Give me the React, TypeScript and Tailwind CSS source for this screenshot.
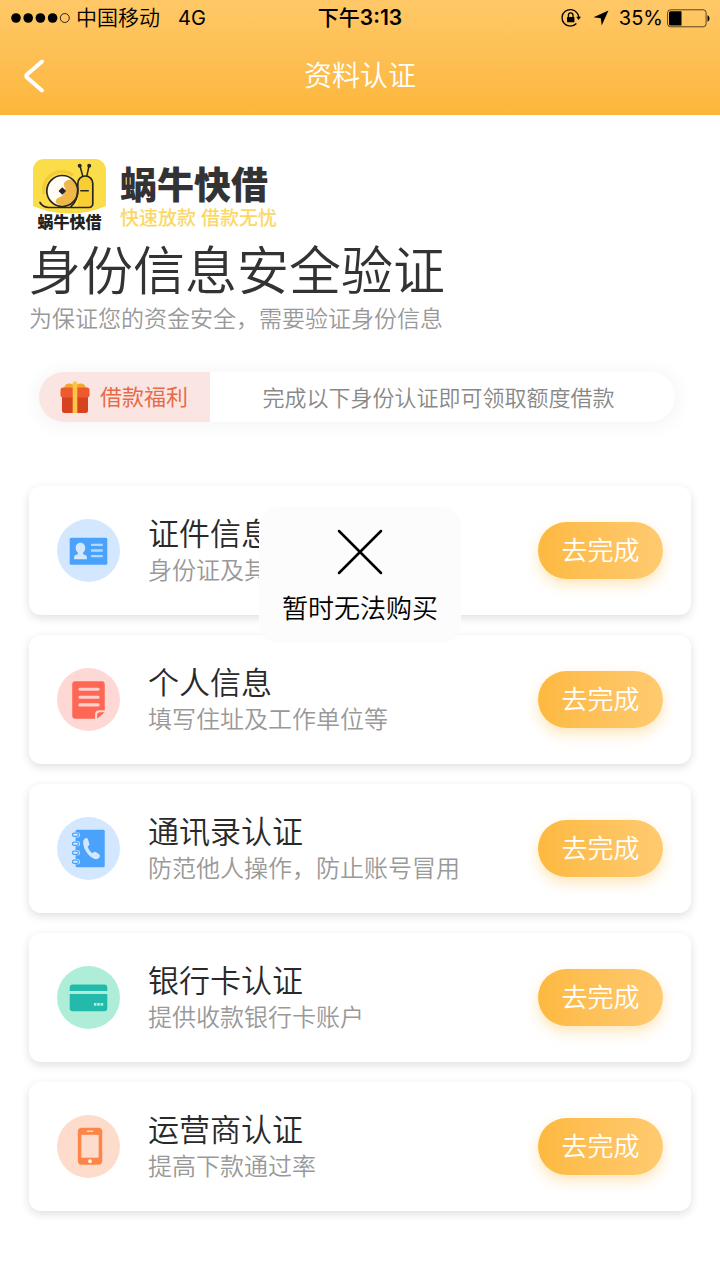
import type { ReactNode } from 'react';

type Step = { title: string; detail: string; icon: ReactNode };

function IdCardIcon() {
  return (
    <svg viewBox="0 0 62 62" className="size-full" aria-hidden="true">
      <circle cx="31" cy="31" r="31" fill="#d3e8fe" />
      <rect x="12.5" y="18.5" width="37" height="26.5" rx="1.5" fill="#4ba2fb" />
      <path d="M23 23.3c-2.8 0-4.6 2.1-4.6 5 0 2 .8 3.7 2.1 4.7v1.7c-2.3.5-3.7 1.3-3.7 3.2v1.6h12.6v-1.6c0-1.9-1.4-2.7-3.7-3.2V33c1.3-1 2.1-2.7 2.1-4.7 0-2.9-2-5-4.8-5z" fill="#d3e8fe" />
      <path d="M33.5 25.5h11.5M33.5 31h11.5M33.5 36.5h11.5" stroke="#b4d9fe" strokeWidth="2.3" />
    </svg>
  );
}

function DocumentIcon() {
  return (
    <svg viewBox="0 0 62 62" className="size-full" aria-hidden="true">
      <circle cx="31" cy="31" r="31" fill="#fed8d5" />
      <path d="M18 13h26a3 3 0 0 1 3 3v25.5h-5.5a4 4 0 0 0-4 4V50H18a3 3 0 0 1-3-3V16a3 3 0 0 1 3-3z" fill="#fe6755" />
      <path d="M39.5 50v-3.5a3 3 0 0 1 3-3H47z" fill="#fe6755" />
      <path d="M22.5 21h18M22.5 28.7h18M22.5 36.3h18" stroke="#fed0ca" strokeWidth="3" strokeLinecap="round" />
    </svg>
  );
}

function ContactsIcon() {
  return (
    <svg viewBox="0 0 62 62" className="size-full" aria-hidden="true">
      <circle cx="31" cy="31" r="31" fill="#d3e8fe" />
      <rect x="18.3" y="12.5" width="28.7" height="37" rx="1.5" fill="#4ba2fb" />
      {[17.5, 26.3, 35.1, 44].map((y) => (
        <g key={y}>
          <rect x="17" y={y - 2.6} width="5.6" height="5.2" rx="2.6" fill="#d3e8fe" />
          <rect x="15.2" y={y - 1.6} width="6" height="3.2" rx="1.6" fill="#d3e8fe" stroke="#4ba2fb" strokeWidth="1.2" />
        </g>
      ))}
      <path d="M28.5 20.7c-1.8.5-3 2.5-2.7 5.2.7 7 5.7 13.4 11.5 15.5 2 .6 4.2-.6 4.8-2.6.3-1-.2-1.9-1-2.5l-2.9-1.9c-.8-.5-1.7-.4-2.4.3l-1 1c-2.2-1.5-3.9-4-4.7-6.6l1-.8c.7-.6.9-1.4.6-2.2l-1.2-4.1c-.3-1-1.1-1.5-2-1.3z" fill="#d3e8fe" />
    </svg>
  );
}

function BankCardIcon() {
  return (
    <svg viewBox="0 0 62 62" className="size-full" aria-hidden="true">
      <circle cx="31" cy="31" r="31" fill="#aeeed9" />
      <path d="M12.5 24.7v-3.5a3 3 0 0 1 3-3h31a3 3 0 0 1 3 3v3.5zM12.5 27.5h37v14a3 3 0 0 1-3 3h-31a3 3 0 0 1-3-3z" fill="#23b9ab" />
      <path d="M36.3 37.8h9.2" stroke="#aeeed9" strokeWidth="2.8" strokeDasharray="2.6 .7" />
    </svg>
  );
}

function PhoneIcon() {
  return (
    <svg viewBox="0 0 62 62" className="size-full" aria-hidden="true">
      <circle cx="31" cy="31" r="31" fill="#fedccb" />
      <rect x="20.5" y="12.5" width="24" height="36.5" rx="4" fill="#fd8549" />
      <rect x="24" y="19.5" width="17" height="22.5" fill="#fedccb" />
      <path d="M30 16h5" stroke="#fedccb" strokeWidth="1.5" strokeLinecap="round" />
      <circle cx="32.5" cy="45.5" r="1.9" fill="#fff0e8" />
    </svg>
  );
}

function SnailLogo() {
  return (
    <svg viewBox="0 0 73 55" className="h-[55px] w-[73px]" aria-hidden="true">
      <path d="M11 0h51a11 11 0 0 1 11 11v36c-10 4.5-22 7.5-36.5 7.5S10 51.5 0 47V11A11 11 0 0 1 11 0z" fill="#fbdd49" />
      <path d="M11 35a18.5 18.5 0 0 1 29-19" fill="none" stroke="#f5ca35" strokeWidth="3" />
      <path d="M45 48V24a7.5 7.5 0 0 1 15 0v20a4 4 0 0 1-4 4.5z" fill="#f8cf32" />
      <circle cx="29.3" cy="32" r="15.5" fill="#fffdf4" />
      <path d="M31 24c3-4 7-4 9-2 5 5 6 14 1 20-5 5-13 6-18 2-1-3 1-5 4-6 5-2 3-5 5-7 1-2-2-4-1-7z" fill="#efb748" />
      <circle cx="29.3" cy="32" r="15.5" fill="none" stroke="#292622" strokeWidth="1.7" />
      <path d="m29.3 29.2 2.8 2.8-2.8 2.8-2.8-2.8z" fill="#292622" stroke="#292622" strokeWidth="1.5" strokeLinejoin="round" />
      <path d="M7 43.5c2 3.5 5 5 9 5h40a3.8 3.8 0 0 0 3.8-3.8V24.5a7.5 7.5 0 0 0-15 0V31c0 7-2 12-6.800 16.5" fill="none" stroke="#292622" strokeWidth="1.7" strokeLinecap="round" />
      <path d="M49.8 17.2 47 7M53.8 17.2 56 7M47.3 31.7h8.5" stroke="#292622" strokeWidth="1.5" />
      <circle cx="46.7" cy="6.7" r="2" fill="#292622" />
      <circle cx="56.2" cy="6.7" r="2" fill="#292622" />
    </svg>
  );
}

function GiftIcon() {
  return (
    <svg viewBox="0 0 30 32" className="h-8 w-[30px]" aria-hidden="true">
      <path d="M4 8.5C4 4 7 2 10 2.5L15 4l5-1.5c3-.5 6 1.5 6 6z" fill="#f3a72c" />
      <rect x="2" y="14" width="26" height="18" rx="2.5" fill="#d74320" />
      <path d="M3 6.5h24a2.5 2.5 0 0 1 2.5 2.5v5a2.5 2.5 0 0 1-2.5 2.5H3A2.5 2.5 0 0 1 .5 14V9A2.5 2.5 0 0 1 3 6.5z" fill="#ee5a30" />
      <path d="M12.7 2.5a2.3 2.3 0 0 1 4.6 0V32h-4.6z" fill="#fcc544" />
    </svg>
  );
}

function StatusBar() {
  return (
    <div className="grid h-9 grid-cols-3 items-center px-2.5 text-[20px] leading-6 text-black">
      <div className="flex items-center whitespace-nowrap">
        <svg viewBox="0 0 60 12" className="h-3 w-[60px]" role="img" aria-label="信号强度">
          <circle cx="6" cy="6" r="4.8" />
          <circle cx="18.2" cy="6" r="4.8" />
          <circle cx="30.4" cy="6" r="4.8" />
          <circle cx="42.6" cy="6" r="4.8" />
          <circle cx="54.8" cy="6" r="4.5" fill="none" stroke="#000" strokeWidth=".8" />
        </svg>
        <span className="ml-1.5 text-[21px] font-[350]">中国移动</span>
        <span className="ml-4.5">4G</span>
      </div>
      <div className="text-center text-[21px] font-medium">
        下午<span className="font-semibold">3:13</span>
      </div>
      <div className="flex items-center justify-end">
        <svg viewBox="0 0 20 20" className="size-5" aria-hidden="true">
          <path d="M16.2 5.2A8.3 8.3 0 1 0 15.4 15.5M16.2 5.2A8 8 0 0 1 17.8 9" fill="none" stroke="#000" strokeWidth="1.3" />
          <path d="M15.2 8.7H20l-2.4 3.3z" />
          <rect x="6" y="9" width="7.4" height="5.3" rx=".6" />
          <path d="M7.4 9.3V7.2a2.3 2.3 0 0 1 4.6 0v2.1" fill="none" stroke="#000" strokeWidth="1.3" />
        </svg>
        <svg viewBox="0 0 16 16" className="ml-3 size-4" aria-hidden="true">
          <path d="M15.5.5 8.7 15.5 7.8 8.2.5 7.3z" />
        </svg>
        <span className="ml-2.5">35%</span>
        <svg viewBox="0 0 43 19" className="ml-1 h-[19px] w-[43px]" role="img" aria-label="电量">
          <rect x=".6" y=".8" width="38.5" height="17" rx="3" fill="none" stroke="#000" strokeOpacity=".65" />
          <path d="M3.5 2.2H14.5v14.2H3.5a1.5 1.5 0 0 1-1.5-1.5V3.7a1.5 1.5 0 0 1 1.5-1.5z" />
          <path d="M40.5 6.3c2.6.6 2.6 5.6 0 6.2z" />
        </svg>
      </div>
    </div>
  );
}

const steps: Step[] = [
  { title: '证件信息', detail: '身份证及其他信息', icon: <IdCardIcon /> },
  { title: '个人信息', detail: '填写住址及工作单位等', icon: <DocumentIcon /> },
  { title: '通讯录认证', detail: '防范他人操作，防止账号冒用', icon: <ContactsIcon /> },
  { title: '银行卡认证', detail: '提供收款银行卡账户', icon: <BankCardIcon /> },
  { title: '运营商认证', detail: '提高下款通过率', icon: <PhoneIcon /> },
];

function StepCard({ title, detail, icon }: Step) {
  return (
    <li className="flex min-h-[129px] items-center rounded-xl bg-white px-7 shadow-[0_3px_10px_rgba(0,0,0,0.13)]">
      <div className="size-[63px] shrink-0">{icon}</div>
      <div className="ml-7 min-w-0 flex-1 pt-0.5">
        <h2 className="text-[31px] leading-[38px] font-[350] text-[#292929]">{title}</h2>
        <p className="text-[24px] leading-9 font-[350] text-[#999]">{detail}</p>
      </div>
      <button
        type="button"
        aria-label={`去完成 ${title}`}
        className="h-[57px] w-[125px] shrink-0 rounded-full bg-linear-to-r from-[#fdb93f] to-[#ffca70] text-[26px] font-[350] text-white shadow-[0_6px_14px_rgba(253,185,63,0.35)]"
      >
        去完成
      </button>
    </li>
  );
}

export default function App() {
  return (
    <div lang="zh-CN" className="relative min-h-screen bg-white font-['Inter','Noto_Sans_CJK_SC',sans-serif]">
      <header className="bg-linear-to-b from-[#ffc867] to-[#fcb63a]">
        <StatusBar />
        <div className="grid h-[79px] grid-cols-[1fr_auto_1fr] items-center px-5">
          <button type="button" aria-label="返回" className="flex h-12 w-8 items-center">
            <svg viewBox="0 0 28 36" className="h-9 w-7" aria-hidden="true">
              <path d="M22 3.5 7 16.5q-1.5 1.5 0 3L22 32.5" fill="none" stroke="#fff" strokeWidth="4" strokeLinecap="round" />
            </svg>
          </button>
          <h1 className="text-[28px] leading-9 font-[350] text-white">资料认证</h1>
        </div>
      </header>

      <main className="px-[29px] pt-11 pb-16">
        <div className="flex items-start pl-1">
          <div className="flex flex-col items-center">
            <SnailLogo />
            <span className="text-[16px] leading-4 font-black text-[#222]">蜗牛快借</span>
          </div>
          <div className="ml-3.5 pt-1.5">
            <div className="text-[37px] leading-[42px] font-black text-[#333]">蜗牛快借</div>
            <div className="text-[19px] leading-6 font-medium text-[#fbd865]">快速放款 借款无忧</div>
          </div>
        </div>

        <h2 className="mt-2.5 text-[52px] leading-[62px] font-[350] text-[#333]">身份信息安全验证</h2>
        <p className="text-[23px] leading-8 font-[350] text-[#999]">为保证您的资金安全，需要验证身份信息</p>

        <section className="mt-[37px] mr-4 ml-2.5 flex h-[50px] rounded-full bg-white shadow-[0_2px_16px_4px_rgba(70,80,120,0.05)]">
          <div className="flex w-[171px] shrink-0 items-center gap-2.5 rounded-l-full bg-[#fbe5e3] pl-[21px]">
            <GiftIcon />
            <span className="text-[22px] leading-8 text-[#e66b49]">借款福利</span>
          </div>
          <p className="flex-1 pt-0.5 pr-2 self-center text-center text-[22px] leading-8 font-[350] text-[#888]">
            完成以下身份认证即可领取额度借款
          </p>
        </section>

        <ul className="mt-16 flex flex-col gap-5">
          {steps.map((step) => (
            <StepCard key={step.title} {...step} />
          ))}
        </ul>
      </main>

      <div
        role="alert"
        className="absolute top-[507px] left-1/2 flex w-[202px] -translate-x-1/2 flex-col items-center rounded-[20px] bg-[#fcfcfc] pt-5.5 pb-4"
      >
        <svg viewBox="0 0 46 46" className="size-[46px]" aria-hidden="true">
          <path d="m2 2 42 42M44 2 2 44" stroke="#000" strokeWidth="2.5" strokeLinecap="round" />
        </svg>
        <p className="mt-4 text-[26px] leading-9 font-[350] text-black">暂时无法购买</p>
      </div>
    </div>
  );
}
